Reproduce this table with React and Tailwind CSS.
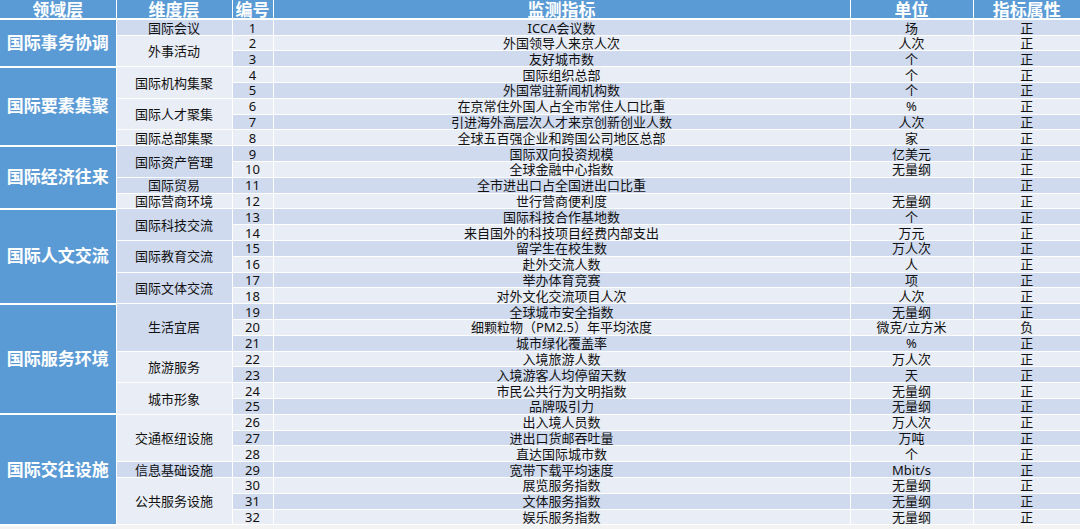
const groups = [
  {
    domain: '国际事务协调',
    dims: [
      { name: '国际会议', rows: [['ICCA会议数', '场', '正']] },
      { name: '外事活动', rows: [['外国领导人来京人次', '人次', '正'], ['友好城市数', '个', '正']] },
    ],
  },
  {
    domain: '国际要素集聚',
    dims: [
      { name: '国际机构集聚', rows: [['国际组织总部', '个', '正'], ['外国常驻新闻机构数', '个', '正']] },
      { name: '国际人才聚集', rows: [['在京常住外国人占全市常住人口比重', '%', '正'], ['引进海外高层次人才来京创新创业人数', '人次', '正']] },
      { name: '国际总部集聚', rows: [['全球五百强企业和跨国公司地区总部', '家', '正']] },
    ],
  },
  {
    domain: '国际经济往来',
    dims: [
      { name: '国际资产管理', rows: [['国际双向投资规模', '亿美元', '正'], ['全球金融中心指数', '无量纲', '正']] },
      { name: '国际贸易', rows: [['全市进出口占全国进出口比重', '', '正']] },
      { name: '国际营商环境', rows: [['世行营商便利度', '无量纲', '正']] },
    ],
  },
  {
    domain: '国际人文交流',
    dims: [
      { name: '国际科技交流', rows: [['国际科技合作基地数', '个', '正'], ['来自国外的科技项目经费内部支出', '万元', '正']] },
      { name: '国际教育交流', rows: [['留学生在校生数', '万人次', '正'], ['赴外交流人数', '人', '正']] },
      { name: '国际文体交流', rows: [['举办体育竞赛', '项', '正'], ['对外文化交流项目人次', '人次', '正']] },
    ],
  },
  {
    domain: '国际服务环境',
    dims: [
      { name: '生活宜居', rows: [['全球城市安全指数', '无量纲', '正'], ['细颗粒物（PM2.5）年平均浓度', '微克/立方米', '负'], ['城市绿化覆盖率', '%', '正']] },
      { name: '旅游服务', rows: [['入境旅游人数', '万人次', '正'], ['入境游客人均停留天数', '天', '正']] },
      { name: '城市形象', rows: [['市民公共行为文明指数', '无量纲', '正'], ['品牌吸引力', '无量纲', '正']] },
    ],
  },
  {
    domain: '国际交往设施',
    dims: [
      { name: '交通枢纽设施', rows: [['出入境人员数', '万人次', '正'], ['进出口货邮吞吐量', '万吨', '正'], ['直达国际城市数', '个', '正']] },
      { name: '信息基础设施', rows: [['宽带下载平均速度', 'Mbit/s', '正']] },
      { name: '公共服务设施', rows: [['展览服务指数', '无量纲', '正'], ['文体服务指数', '无量纲', '正'], ['娱乐服务指数', '无量纲', '正']] },
    ],
  },
];

const headers = ['领域层', '维度层', '编号', '监测指标', '单位', '指标属性'];

function buildRows() {
  const out = [];
  let no = 0;
  groups.forEach((group) => {
    const span = group.dims.reduce((sum, d) => sum + d.rows.length, 0);
    group.dims.forEach((dim, di) => {
      dim.rows.forEach((row, ri) => {
        no += 1;
        out.push({
          no,
          domain: di === 0 && ri === 0 ? { name: group.domain, span } : null,
          dim: ri === 0 ? { name: dim.name, span: dim.rows.length, dark: no % 2 === 1 } : null,
          cells: row,
        });
      });
    });
  });
  return out;
}

const cell = 'border border-white p-0 text-center align-middle leading-[14px]';

export default function App() {
  const rows = buildRows();

  return (
    <div className="h-[529px] w-[1080px] overflow-hidden bg-[#f3f3f3] font-['Noto_Sans','Noto_Sans_CJK_SC',sans-serif] text-[13px] text-[#111]">
      <table className="w-[1080px] table-fixed border-collapse">
        <colgroup>
          <col className="w-[116px]" />
          <col className="w-[116px]" />
          <col className="w-[41px]" />
          <col className="w-[577px]" />
          <col className="w-[123px]" />
          <col className="w-[107px]" />
        </colgroup>
        <thead>
          <tr className="h-[19.4px] bg-[#5b9bd5]">
            {headers.map((h) => (
              <th
                key={h}
                className="border border-b-2 border-t-0 border-white p-0 text-center align-middle text-[17px] font-bold leading-[17px] text-white first:border-l-0 last:border-r-0"
              >
                {h}
              </th>
            ))}
          </tr>
        </thead>
        <tbody>
          {rows.map((row) => {
            const band = row.no % 2 === 1 ? 'bg-[#cfdaee]' : 'bg-[#e9edf5]';
            return (
              <tr key={row.no} className="h-[15.8px]">
                {row.domain && (
                  <td
                    rowSpan={row.domain.span}
                    className={`${cell} border-b-2 border-l-0 bg-[#5b9bd5] text-[17px] font-bold text-white`}
                  >
                    {row.domain.name}
                  </td>
                )}
                {row.dim && (
                  <td
                    rowSpan={row.dim.span}
                    className={`${cell} ${row.dim.dark ? 'bg-[#cfdaee]' : 'bg-[#e9edf5]'}`}
                  >
                    {row.dim.name}
                  </td>
                )}
                <td className={`${cell} ${band}`}>{row.no}</td>
                <td className={`${cell} ${band}`}>{row.cells[0]}</td>
                <td className={`${cell} ${band}`}>{row.cells[1]}</td>
                <td className={`${cell} ${band} border-r-0`}>{row.cells[2]}</td>
              </tr>
            );
          })}
        </tbody>
      </table>
    </div>
  );
}
